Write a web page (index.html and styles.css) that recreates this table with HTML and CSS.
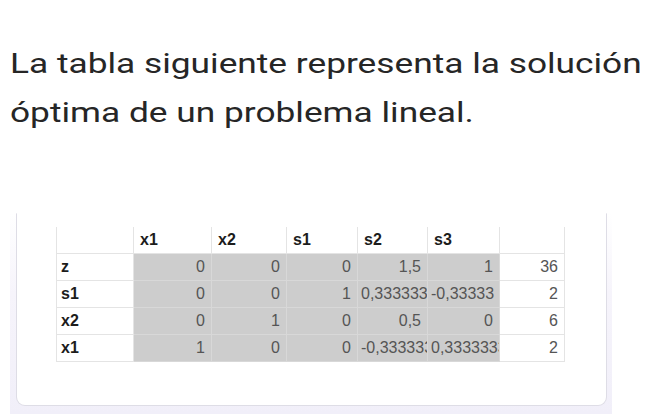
FILE: index.html
```html
<!DOCTYPE html>
<html lang="es">
<head>
<meta charset="utf-8">
<link rel="stylesheet" href="styles.css">
</head>
<body>
<p class="title">La tabla siguiente representa la solución óptima de un problema lineal.</p>
<div class="shade">
  <div class="card">
    <table class="sheet">
      <colgroup>
        <col class="c-lab"><col class="c-x1"><col class="c-x2"><col class="c-s1"><col class="c-s2"><col class="c-s3"><col class="c-val">
      </colgroup>
      <thead>
        <tr><th></th><th>x1</th><th>x2</th><th>s1</th><th>s2</th><th>s3</th><th></th></tr>
      </thead>
      <tbody>
        <tr><th>z</th><td class="g">0</td><td class="g">0</td><td class="g">0</td><td class="g">1,5</td><td class="g">1</td><td>36</td></tr>
        <tr><th>s1</th><td class="g">0</td><td class="g">0</td><td class="g">1</td><td class="g clip">0,333333333</td><td class="g clip">-0,33333</td><td>2</td></tr>
        <tr><th>x2</th><td class="g">0</td><td class="g">1</td><td class="g">0</td><td class="g">0,5</td><td class="g">0</td><td>6</td></tr>
        <tr><th>x1</th><td class="g">1</td><td class="g">0</td><td class="g">0</td><td class="g clip">-0,333333333</td><td class="g clip">0,333333333</td><td>2</td></tr>
      </tbody>
    </table>
  </div>
</div>
</body>
</html>
```
FILE: styles.css
```css
html, body {
  margin: 0;
  padding: 0;
  background: #ffffff;
}
body {
  width: 653px;
  height: 414px;
  overflow: hidden;
}
.title {
  margin: 39px 0 0 10px;
  width: 508px;
  font-family: Roboto, "Noto Sans", sans-serif;
  font-size: 28px;
  line-height: 49px;
  color: #262626;
  transform: scaleX(1.26);
  transform-origin: left top;
}
.shade {
  margin: 76px 0 0 10px;
  width: 591px;
  padding: 0 5px 8px 6px;
  background: linear-gradient(#ffffff 0, #f6f4fb 40%, #f1eff9 100%);
}
.card {
  background: #ffffff;
  border: 1px solid #dedde6;
  border-top-color: transparent;
  border-radius: 0 0 9px 9px;
  padding: 13px 0 43px 39px;
  height: 135px;
}
.sheet {
  border-collapse: collapse;
  table-layout: fixed;
  width: 508px;
  font-family: "Liberation Sans", Arial, sans-serif;
  font-size: 16px;
}
.c-lab { width: 77px; }
.c-x1 { width: 78px; }
.c-x2 { width: 75px; }
.c-s1 { width: 71px; }
.c-s2 { width: 70px; }
.c-s3 { width: 72px; }
.c-val { width: 65px; }
.sheet th, .sheet td {
  height: 26px;
  padding: 0 6px 0 6px;
  border: 1px solid #e4e4e4;
  overflow: hidden;
  white-space: nowrap;
}
.sheet thead th {
  border-top: none;
  text-align: left;
  font-weight: bold;
  color: #1c1c1c;
}
.sheet tbody th {
  text-align: left;
  font-weight: bold;
  color: #1c1c1c;
  padding-left: 4px;
}
.sheet td {
  text-align: right;
  color: #555555;
}
.sheet td.g {
  background: #cdcdcd;
  border-color: #d8d8d8;
}
.sheet td.clip {
  text-align: left;
  padding: 0 0 0 3px;
  text-overflow: clip;
}
```
